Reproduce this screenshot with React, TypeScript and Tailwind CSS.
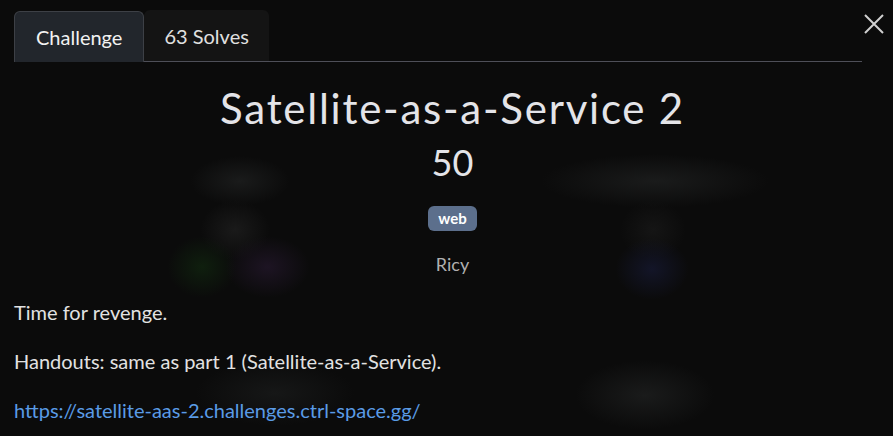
import React from "react";

const blobs: { left: number; top: number; w: number; h: number; color: string }[] = [
  { left: 190, top: 156, w: 100, h: 50, color: "#1a1b1b" },
  { left: 200, top: 200, w: 70, h: 60, color: "#1a1a1a" },
  { left: 167, top: 236, w: 70, h: 62, color: "#0f1f0e" },
  { left: 225, top: 236, w: 85, h: 62, color: "#1d1423" },
  { left: 540, top: 154, w: 230, h: 54, color: "#1a1b1b" },
  { left: 620, top: 200, w: 66, h: 60, color: "#151515" },
  { left: 615, top: 238, w: 74, h: 62, color: "#131528" },
  { left: 575, top: 360, w: 140, h: 70, color: "#1a1b1b" },
  { left: 195, top: 360, w: 160, h: 66, color: "#161717" },
];

export default function App() {
  return (
    <div
      className="relative w-[893px] h-[436px] overflow-hidden bg-[#0b0b0b] text-[#e6e6e6]"
      style={{ fontFamily: "Lato, 'Open Sans', sans-serif" }}
    >
      {blobs.map((b, i) => (
        <div
          key={i}
          className="absolute"
          style={{
            left: b.left,
            top: b.top,
            width: b.w,
            height: b.h,
            background: `radial-gradient(ellipse at center, ${b.color} 0%, rgba(11,11,11,0) 70%)`,
          }}
        />
      ))}

      <div className="relative pl-[14px] pr-[2px] pt-[10px]">
        <div className="flex items-end border-b border-[#4e4f58] w-[848px]">
          <div className="h-[51px] px-[21px] flex items-center rounded-t-[6px] border border-b-0 border-[#3d4046] bg-[#22262c] text-[20px] text-[#f2f2f2] -mb-px">
            Challenge
          </div>
          <div className="h-[51px] px-[20px] flex items-center rounded-t-[6px] bg-[#141414] text-[20px] text-[#e0e0e0]">
            63 Solves
          </div>
        </div>

        <button className="absolute right-[7px] top-[12px] w-[24px] h-[24px] flex items-center justify-center text-[#d0d0d0]">
          <svg width="22" height="22" viewBox="0 0 22 22" fill="none" stroke="currentColor" strokeWidth="2">
            <path d="M2 2 L20 20 M20 2 L2 20" />
          </svg>
        </button>

        <div className="flex flex-col items-center">
          <h2 className="mt-[22px] text-[42px] leading-[48px] tracking-[1.75px] text-[#e4e4e8]">
            Satellite-as-a-Service 2
          </h2>
          <div className="mt-[10px] text-[36px] leading-[40px] text-[#e4e4e8]">50</div>
          <span className="mt-[24px] h-[25px] px-[10px] flex items-center rounded-[6px] bg-[#5c6f8c] text-[15px] font-bold text-white">
            web
          </span>
          <div className="mt-[20px] text-[18px] text-[#b0b0b0]">Ricy</div>
        </div>

        <div className="mt-[22px] text-[20px] text-[#e2e2e2] leading-[24px]">
          <p>Time for revenge.</p>
          <p className="mt-[25px]">Handouts: same as part 1 (Satellite-as-a-Service).</p>
          <p className="mt-[25px]">
            <a className="text-[#5a9be6]">https://satellite-aas-2.challenges.ctrl-space.gg/</a>
          </p>
        </div>
      </div>
    </div>
  );
}
